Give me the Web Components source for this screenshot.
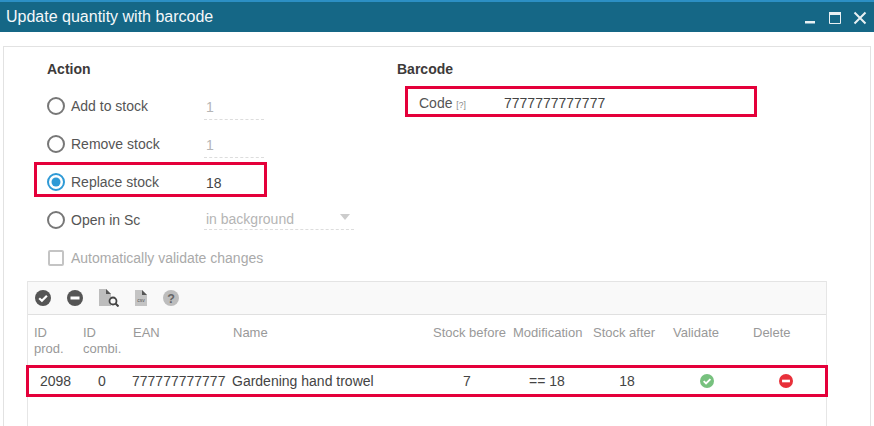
<!DOCTYPE html>
<html>
<head>
<meta charset="utf-8">
<title>Update quantity with barcode</title>
<style>
  html, body { margin: 0; height: 100%; background: #fff; overflow: hidden; }
  body { font-family: "Liberation Sans", Arial, sans-serif; color: #444; }
</style>
</head>
<body>
<barcode-window title="Update quantity with barcode">
  <div style="display:flex">
    <form-section heading="Action" style="width:350px">
      <option-row label="Add to stock" value="1"></option-row>
      <option-row label="Remove stock" value="1"></option-row>
      <option-row label="Replace stock" value="18" checked></option-row>
      <option-row label="Open in Sc" value="in background" select></option-row>
      <check-row label="Automatically validate changes"></check-row>
    </form-section>
    <form-section heading="Barcode">
      <code-field label="Code" value="7777777777777"></code-field>
    </form-section>
  </div>
  <stock-table></stock-table>
  <red-mark style="left:30px;top:115px;width:227px;height:29px"></red-mark>
  <red-mark style="left:401px;top:39px;width:346px;height:25px"></red-mark>
  <red-mark style="left:22px;top:318px;width:796px;height:26px"></red-mark>
</barcode-window>

<script>
class BarcodeWindow extends HTMLElement {
  connectedCallback() {
    this.attachShadow({ mode: 'open' });
    this.shadowRoot.innerHTML = `
      <style>
        :host { display: flex; flex-direction: column; height: 100vh; overflow: hidden; }
        .bar {
          display: flex;
          align-items: center;
          justify-content: space-between;
          flex: none;
          height: 30px;
          background: #156786;
          border-top: 2px solid #2c8fc4;
          color: #f4f8fa;
          font-size: 16px;
          padding: 0 7px 0 6px;
        }
        .btns { display: flex; gap: 12px; align-items: center; padding-top: 2px; }
        svg { display: block; }
        .panel {
          position: relative;
          flex: 1;
          margin: 14px 3px 0 3px;
          border: 1px solid #e2e2e2;
          border-bottom: 0;
          padding: 12px 0 0 23px;
        }
      </style>
      <div class="bar">
        <span class="title">${this.getAttribute('title')}</span>
        <span class="btns">
          <svg width="12" height="12" viewBox="0 0 12 12" style="margin-right:1px"><rect x="1" y="9" width="10" height="2.500" fill="#e8f0f3"/></svg>
          <svg width="12" height="12" viewBox="0 0 12 12"><path d="M.5 1h11v10.500H.5z" fill="none" stroke="#e8f0f3"/><rect x="0" y="0" width="12" height="3" fill="#e8f0f3"/></svg>
          <svg width="14" height="14" viewBox="0 0 14 14"><path d="M1.500 1.500l11 11M12.500 1.500l-11 11" stroke="#e8f0f3" stroke-width="2" fill="none"/></svg>
        </span>
      </div>
      <div class="panel"><slot></slot></div>
    `;
  }
}

class FormSection extends HTMLElement {
  connectedCallback() {
    this.attachShadow({ mode: 'open' });
    this.shadowRoot.innerHTML = `
      <style>
        :host { display: block; padding-left: 20px; box-sizing: border-box; }
        h3 {
          margin: 0;
          font-size: 14px;
          line-height: 20px;
          font-weight: bold;
          color: #3d3a3a;
        }
      </style>
      <h3>${this.getAttribute('heading')}</h3>
      <slot></slot>
    `;
  }
}

class OptionRow extends HTMLElement {
  connectedCallback() {
    this.attachShadow({ mode: 'open' });
    const on = this.hasAttribute('checked');
    const isSelect = this.hasAttribute('select');
    this.shadowRoot.innerHTML = `
      <style>
        :host { display: flex; align-items: center; height: 38px; font-size: 14px; color: #555; }
        :host(:first-of-type) { margin-top: 8px; }
        .radio { flex: none; width: 18px; height: 18px; margin-right: 6px; display: block; }
        .label { width: 133px; flex: none; }
        .val {
          box-sizing: border-box;
          width: ${isSelect ? 150 : 60}px;
          height: ${isSelect ? 24 : 28}px;
          padding: ${isSelect ? 5 : 7}px 2px 0;
          position: relative;
          top: ${isSelect ? -2 : 0}px;
          color: ${on ? '#444' : '#b5b5b5'};
          border-bottom: ${on ? '0' : '1px dashed #ddd'};
        }
        .arrow {
          position: absolute;
          right: 4px;
          top: 8px;
          border: 5px solid transparent;
          border-top: 6px solid #ccc;
          border-bottom: 0;
        }
      </style>
      <svg class="radio" viewBox="0 0 18 18">
        <circle cx="9" cy="9" r="8" fill="#fff" stroke="${on ? '#2f9ad6' : '#777'}" stroke-width="2"/>
        ${on ? '<circle cx="9" cy="9" r="4.500" fill="#2f9ad6"/>' : ''}
      </svg>
      <span class="label">${this.getAttribute('label')}</span>
      <span class="val">${this.getAttribute('value')}${isSelect ? '<i class="arrow"></i>' : ''}</span>
    `;
  }
}

class CheckRow extends HTMLElement {
  connectedCallback() {
    this.attachShadow({ mode: 'open' });
    this.shadowRoot.innerHTML = `
      <style>
        :host { display: flex; align-items: center; height: 38px; font-size: 14px; color: #aaa; }
        .box {
          box-sizing: border-box;
          width: 16px;
          height: 16px;
          margin: 0 7px 0 1px;
          border: 2px solid #c4c4c4;
          border-radius: 2px;
        }
      </style>
      <span class="box"></span>
      <span>${this.getAttribute('label')}</span>
    `;
  }
}

class CodeField extends HTMLElement {
  connectedCallback() {
    this.attachShadow({ mode: 'open' });
    this.shadowRoot.innerHTML = `
      <style>
        :host { display: flex; align-items: center; height: 26px; margin-top: 11px; padding-left: 22px; font-size: 14px; color: #555; }
        .label { width: 85px; flex: none; }
        sup { font-size: 8.500px; color: #888; vertical-align: baseline; }
        .val { color: #444; }
      </style>
      <span class="label">${this.getAttribute('label')} <sup>[?]</sup></span>
      <span class="val">${this.getAttribute('value')}</span>
    `;
  }
}

const GLYPHS = {
  check: (bg, fg) => `<circle cx="8" cy="8" r="8" fill="${bg}"/><path d="M4.200 8.200l2.700 2.600 5-5" fill="none" stroke="${fg}" stroke-width="2.200"/>`,
  minus: (bg, fg) => `<circle cx="8" cy="8" r="8" fill="${bg}"/><rect x="3.500" y="6.500" width="9" height="3" fill="${fg}"/>`
};

function icon(name, bg, fg, size) {
  return `<svg width="${size}" height="${size}" viewBox="0 0 16 16">${GLYPHS[name](bg, fg)}</svg>`;
}

class StockTable extends HTMLElement {
  connectedCallback() {
    this.attachShadow({ mode: 'open' });
    const heads = ['ID<br>prod.', 'ID<br>combi.', 'EAN', 'Name', 'Stock before', 'Modification', 'Stock after', 'Validate', 'Delete'];
    this.shadowRoot.innerHTML = `
      <style>
        :host {
          display: block;
          width: 800px;
          box-sizing: border-box;
          margin-top: 4px;
          font-size: 13px;
          height: 145px;
          border-left: 1px solid #e6e6e6;
          border-right: 1px solid #e6e6e6;
        }
        .tools {
          display: flex;
          align-items: center;
          height: 34px;
          box-sizing: border-box;
          background: #f9f9f9;
          border-top: 1px solid #e4e4e4;
          border-bottom: 1px solid #e0e0e0;
          padding-left: 7px;
          gap: 16px;
        }
        svg { display: block; flex: none; }
        .grid {
          display: grid;
          grid-template-columns: 49px 50px 100px 200px 80px 80px 80px 80px 78px;
        }
        .th {
          height: 50px;
          box-sizing: border-box;
          padding: 10px 0 0 6px;
          line-height: 16px;
          color: #999;
          white-space: nowrap;
        }
        .td {
          height: 32px;
          display: flex;
          align-items: center;
          justify-content: center;
          font-size: 14px;
          color: #444;
          white-space: nowrap;
          overflow: hidden;
        }
        .ean { justify-content: flex-start; padding-left: 5px; margin-right: 1px; box-sizing: border-box; }
        .name { justify-content: flex-start; padding-left: 5px; }
      </style>
      <div class="tools">
        ${icon('check', '#555', '#fff', 16)}
        ${icon('minus', '#555', '#fff', 16)}
        <svg width="20" height="18" viewBox="0 0 20 18">
          <path d="M0 0h7l5 5v12H0z" fill="#bdbdbd"/><path d="M7 0l5 5H7z" fill="#555"/>
          <circle cx="14" cy="12" r="3.500" fill="#f9f9f9" stroke="#444" stroke-width="1.800"/>
          <path d="M16.500 14.500l3 3" stroke="#444" stroke-width="2"/>
        </svg>
        <svg width="12" height="16" viewBox="0 0 12 16">
          <path d="M0 0h7l5 5v11H0z" fill="#c4c4c4"/><path d="M7 0l5 5H7z" fill="#555"/>
          <text x="6" y="12" font-size="5" font-family="Liberation Sans" text-anchor="middle" fill="#555">csv</text>
        </svg>
        <svg width="16" height="16" viewBox="0 0 16 16">
          <circle cx="8" cy="8" r="8" fill="#bdbdbd"/>
          <text x="8" y="12.500" font-size="12.500" font-weight="bold" font-family="Liberation Sans" text-anchor="middle" fill="#666">?</text>
        </svg>
      </div>
      <div class="grid">
        ${heads.map(h => `<div class="th">${h}</div>`).join('')}
        <div class="td" style="padding-left:6px">2098</div>
        <div class="td">0</div>
        <div class="td ean">7777777777777</div>
        <div class="td name">Gardening hand trowel</div>
        <div class="td">7</div>
        <div class="td">== 18</div>
        <div class="td">18</div>
        <div class="td">${icon('check', '#77c17e', '#fff', 14)}</div>
        <div class="td">${icon('minus', '#e8303a', '#fff', 14)}</div>
      </div>
    `;
  }
}

// annotation frame drawn over the screenshot, it sits on top of the form
class RedMark extends HTMLElement {
  connectedCallback() {
    this.attachShadow({ mode: 'open' });
    this.shadowRoot.innerHTML = `
      <style>
        :host { display: block; position: absolute; border: 3px solid #e4003a; pointer-events: none; }
      </style>
    `;
  }
}

customElements.define('barcode-window', BarcodeWindow);
customElements.define('form-section', FormSection);
customElements.define('option-row', OptionRow);
customElements.define('check-row', CheckRow);
customElements.define('code-field', CodeField);
customElements.define('stock-table', StockTable);
customElements.define('red-mark', RedMark);
</script>
</body>
</html>
